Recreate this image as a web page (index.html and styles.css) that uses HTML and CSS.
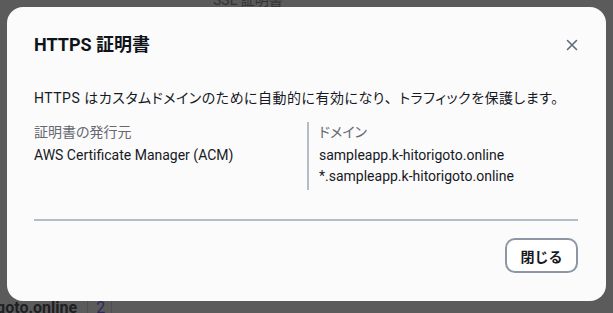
FILE: index.html
```html
<!DOCTYPE html>
<html lang="ja">
<head>
<meta charset="utf-8">
<link rel="stylesheet" href="styles.css">
</head>
<body>
<div class="page">
  <div class="page-top">SSL 証明書</div>
  <div class="page-bottom"><span class="page-domain">goto.online</span><span class="page-badge">2</span></div>
</div>
<div class="modal" role="dialog">
  <div class="modal-header">
    <h2 class="modal-title">HTTPS 証明書</h2>
    <button class="close" aria-label="閉じる">
      <svg width="12" height="12" viewBox="0 0 12 12"><path d="M1.5 1.5 L10.5 10.5 M10.5 1.5 L1.5 10.5" stroke="#5f6b7a" stroke-width="1.6" fill="none" stroke-linecap="round"/></svg>
    </button>
  </div>
  <div class="modal-body">
    <p class="desc">HTTPS はカスタムドメインのために自動的に有効になり<span class="full">、</span>トラフィックを保護します。</p>
    <div class="cols">
      <div class="col">
        <div class="label">証明書の発行元</div>
        <div class="value">AWS Certificate Manager (ACM)</div>
      </div>
      <div class="col col-right">
        <div class="label">ドメイン</div>
        <div class="value">sampleapp.k-hitorigoto.online</div>
        <div class="value">*.sampleapp.k-hitorigoto.online</div>
      </div>
    </div>
  </div>
  <div class="modal-footer">
    <button class="btn">閉じる</button>
  </div>
</div>
</body>
</html>
```

FILE: styles.css
```css
* { box-sizing: border-box; }
html, body { margin: 0; padding: 0; }
body {
  width: 613px;
  height: 313px;
  overflow: hidden;
  background: #5b5b5c;
  font-family: Roboto, "Noto Sans CJK JP", sans-serif;
  font-feature-settings: "palt";
  color: #16191f;
  position: relative;
}
.page {
  height: 313px;
  display: flex;
  flex-direction: column;
  justify-content: space-between;
  color: #2a2d33;
}
.page-top {
  padding-left: 213px;
  font-size: 14px;
  line-height: 14px;
  margin-top: -7px;
  color: #333;
}
.page-bottom {
  display: flex;
  align-items: flex-end;
  height: 13px;
  font-size: 16px;
  font-weight: 700;
  line-height: 16px;
  margin-bottom: -3px;
}
.page-domain { margin-left: -4px; color: #1e1f22; }
.page-badge {
  margin-left: 10px;
  padding: 0 6px 0 8px;
  border-left: 1px solid #4e4e55;
  border-right: 1px solid #4e4e55;
  color: #2f2a56;
  font-weight: 400;
}
.modal {
  position: absolute;
  left: 7px;
  top: 7px;
  width: 599px;
  height: 294px;
  background: #fbfbfb;
  border-radius: 16px;
  display: flex;
  flex-direction: column;
}
.modal-header {
  display: flex;
  align-items: center;
  justify-content: space-between;
  padding: 26px 26px 0 27px;
  height: 50px;
}
.modal-title {
  margin: 0;
  font-size: 18px;
  line-height: 24px;
  font-weight: 700;
  color: #0f141a;
}
.close {
  border: 0;
  background: none;
  padding: 0;
  width: 12px;
  height: 12px;
  margin-right: 2px;
  display: flex;
}
.modal-body {
  padding: 31px 28px 0 27px;
}
.desc {
  margin: 0;
  font-size: 14px;
  line-height: 20px;
  white-space: nowrap;
  letter-spacing: 0.5px;
}
.full { font-feature-settings: normal; }
.cols {
  display: flex;
  margin-top: 14px;
}
.col {
  width: 273px;
  font-size: 14px;
}
.col-right {
  border-left: 2px solid #b4bcc8;
  padding-left: 10px;
  width: auto;
  padding-bottom: 3px;
}
.label {
  color: #656871;
  line-height: 20px;
  margin-bottom: 3px;
}
.value {
  line-height: 21px;
}
.modal-footer {
  margin: auto 28px 0 27px;
  border-top: 2px solid #b4bcc8;
  padding: 17px 0 28px;
  display: flex;
  justify-content: flex-end;
}
.btn {
  width: 73px;
  height: 35px;
  border: 2px solid #8c96a4;
  border-radius: 10px;
  background: #ffffff;
  font-family: inherit;
  font-size: 14px;
  font-weight: 700;
  color: #16191f;
}
```
